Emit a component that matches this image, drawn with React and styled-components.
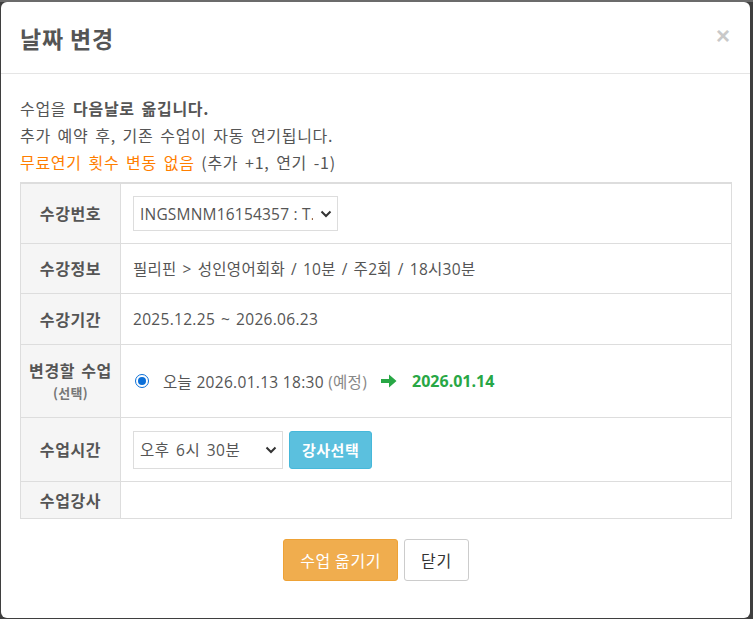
import React from "react";
import styled, { createGlobalStyle } from "styled-components";

const GlobalStyle = createGlobalStyle`
  html, body {
    margin: 0;
    padding: 0;
    background: #3f3f3f;
  }
  body {
    font-family: "Open Sans", "Noto Sans CJK KR", sans-serif;
    color: #555;
  }
  * {
    box-sizing: border-box;
  }
`;

const Page = styled.div`
  width: 753px;
  height: 619px;
  overflow: hidden;
  padding: 2px 3px 0 1px;
  background: linear-gradient(#6b6b6b 0, #6b6b6b 2px, #3f3f3f 2px);
`;

const Modal = styled.div`
  width: 749px;
  height: 616px;
  background: #fff;
  border-radius: 6px;
  display: flex;
  flex-direction: column;
  overflow: hidden;
`;

const Header = styled.div`
  height: 72px;
  border-bottom: 1px solid #e5e5e5;
  display: flex;
  align-items: center;
  justify-content: space-between;
  padding: 0 20px 0 19px;
`;

const Title = styled.h4`
  margin: 0;
  font-family: "Noto Sans CJK KR", sans-serif;
  font-size: 23px;
  font-weight: 700;
  color: #555;
  letter-spacing: 0.8px;
`;

const Close = styled.button`
  border: none;
  background: none;
  padding: 0;
  font-family: "Liberation Sans", sans-serif;
  font-size: 24px;
  font-weight: 700;
  color: #c9c9c9;
  line-height: 1;
  margin-top: -4px;
`;

const Body = styled.div`
  padding: 21px 19px 0 19px;
`;

const Notice = styled.div`
  font-family: "Noto Sans CJK KR", sans-serif;
  font-size: 16px;
  letter-spacing: 0.7px;
  word-spacing: 2.5px;
  line-height: 27px;
  color: #555;
  margin-bottom: 6px;
`;

const Strong = styled.b`
  font-weight: 700;
`;

const Orange = styled.span`
  color: #ff7e00;
`;

const Table = styled.div`
  width: 712px;
  border: 1px solid #ddd;
  border-top: 2px solid #ddd;
  display: grid;
  grid-template-columns: 100px 1fr;
`;

const Label = styled.div`
  height: ${(p) => p.h}px;
  background: #f5f5f5;
  border-right: 1px solid #ddd;
  border-bottom: ${(p) => (p.last ? "none" : "1px solid #ddd")};
  display: flex;
  flex-direction: column;
  align-items: center;
  justify-content: center;
  font-family: "Noto Sans CJK KR", sans-serif;
  font-size: 16px;
  letter-spacing: 0.6px;
  word-spacing: 2px;
  font-weight: 700;
  color: #555;
  line-height: 23px;
`;

const Sub = styled.span`
  font-size: 13px;
  letter-spacing: 0.3px;
  color: #777;
  line-height: 22px;
`;

const Cell = styled.div`
  height: ${(p) => p.h}px;
  border-bottom: ${(p) => (p.last ? "none" : "1px solid #ddd")};
  display: flex;
  align-items: center;
  gap: ${(p) => (p.tight ? 0 : 6)}px;
  padding: 0 12px;
  font-family: "Open Sans", "Noto Sans CJK KR", sans-serif;
  font-size: 15.5px;
  letter-spacing: 0.3px;
  word-spacing: ${(p) => (p.tight ? 0 : 1.6)}px;
  color: #555;
`;

const SelectWrap = styled.div`
  position: relative;
  width: ${(p) => p.w}px;
  height: ${(p) => p.hh}px;
`;

const Select = styled.select`
  appearance: none;
  width: 100%;
  height: 100%;
  border: 1px solid #ddd;
  background: #fff;
  padding: 0 24px 0 6px;
  font-family: "Open Sans", "Noto Sans CJK KR", sans-serif;
  font-size: 15.5px;
  letter-spacing: ${(p) => p.ls || 0.2}px;
  word-spacing: ${(p) => p.ws || 0}px;
  color: #555;
  border-radius: 0;
  outline: none;
`;

const Chevron = styled.svg`
  position: absolute;
  right: ${(p) => p.r}px;
  top: 50%;
  margin-top: -4px;
  pointer-events: none;
`;

const RadioDot = styled.span`
  width: 14px;
  height: 14px;
  border-radius: 50%;
  border: 1.5px solid #0b6fd8;
  display: inline-flex;
  align-items: center;
  justify-content: center;
  margin: 0 14px 0 2px;
  &::after {
    content: "";
    width: 8px;
    height: 8px;
    border-radius: 50%;
    background: #0b6fd8;
  }
`;

const Muted = styled.span`
  color: #888;
`;

const NewDate = styled.span`
  color: #28a745;
  font-weight: 700;
  font-size: 16px;
  letter-spacing: 0;
`;

const InfoButton = styled.button`
  height: 38px;
  padding: 0 12px;
  background: #5bc0de;
  border: 1px solid #46b8da;
  border-radius: 3px;
  color: #fff;
  font-family: "Noto Sans CJK KR", sans-serif;
  font-size: 15px;
  letter-spacing: 0.5px;
  font-weight: 700;
`;

const Footer = styled.div`
  display: flex;
  justify-content: center;
  gap: 6px;
  padding-top: 20px;
  padding-left: 1px;
`;

const Btn = styled.button`
  height: 42px;
  padding: 0 16px;
  border-radius: 3px;
  border: 1px solid ${(p) => (p.primary ? "#eea236" : "#ccc")};
  background: ${(p) => (p.primary ? "#f0ad4e" : "#fff")};
  color: ${(p) => (p.primary ? "#fff" : "#333")};
  font-family: "Noto Sans CJK KR", sans-serif;
  font-size: 16px;
  letter-spacing: 0.6px;
`;

const ChevronIcon = ({ r }) => (
  <Chevron r={r} width="12" height="8" viewBox="0 0 12 8">
    <path d="M1.5 1.5 L6 6 L10.5 1.5" fill="none" stroke="#333" strokeWidth="2" />
  </Chevron>
);

const ArrowIcon = () => (
  <svg width="16" height="14" viewBox="0 0 16 14" style={{ margin: "0 15px 0 14px" }}>
    <path d="M0 5 H8 V0.5 L15.5 7 L8 13.5 V9 H0 Z" fill="#28a745" />
  </svg>
);

export default function App() {
  return (
    <Page>
      <GlobalStyle />
      <Modal>
        <Header>
          <Title>날짜 변경</Title>
          <Close>×</Close>
        </Header>
        <Body>
          <Notice>
            수업을 <Strong>다음날로 옮깁니다.</Strong>
            <br />
            추가 예약 후, 기존 수업이 자동 연기됩니다.
            <br />
            <Orange>무료연기 횟수 변동 없음</Orange> (추가 +1, 연기 -1)
          </Notice>
          <Table>
            <Label h={60}>수강번호</Label>
            <Cell h={60}>
              <SelectWrap w={205} hh={35}>
                <Select defaultValue="a">
                  <option value="a">INGSMNM16154357 : T.</option>
                </Select>
                <ChevronIcon r={6} />
              </SelectWrap>
            </Cell>
            <Label h={50}>수강정보</Label>
            <Cell h={50}>필리핀 &gt; 성인영어회화 / 10분 / 주2회 / 18시30분</Cell>
            <Label h={51}>수강기간</Label>
            <Cell h={51}>2025.12.25 ~ 2026.06.23</Cell>
            <Label h={73}>
              변경할 수업
              <Sub>(선택)</Sub>
            </Label>
            <Cell h={73} tight>
              <RadioDot />
              오늘 2026.01.13 18:30&nbsp;<Muted>(예정)</Muted>
              <ArrowIcon />
              <NewDate>2026.01.14</NewDate>
            </Cell>
            <Label h={64}>수업시간</Label>
            <Cell h={64}>
              <SelectWrap w={150} hh={38}>
                <Select defaultValue="1830" ls={0.5} ws={2}>
                  <option value="1830">오후 6시 30분</option>
                </Select>
                <ChevronIcon r={6} />
              </SelectWrap>
              <InfoButton>강사선택</InfoButton>
            </Cell>
            <Label h={36} last>
              수업강사
            </Label>
            <Cell h={36} last />
          </Table>
          <Footer>
            <Btn primary>수업 옮기기</Btn>
            <Btn>닫기</Btn>
          </Footer>
        </Body>
      </Modal>
    </Page>
  );
}
